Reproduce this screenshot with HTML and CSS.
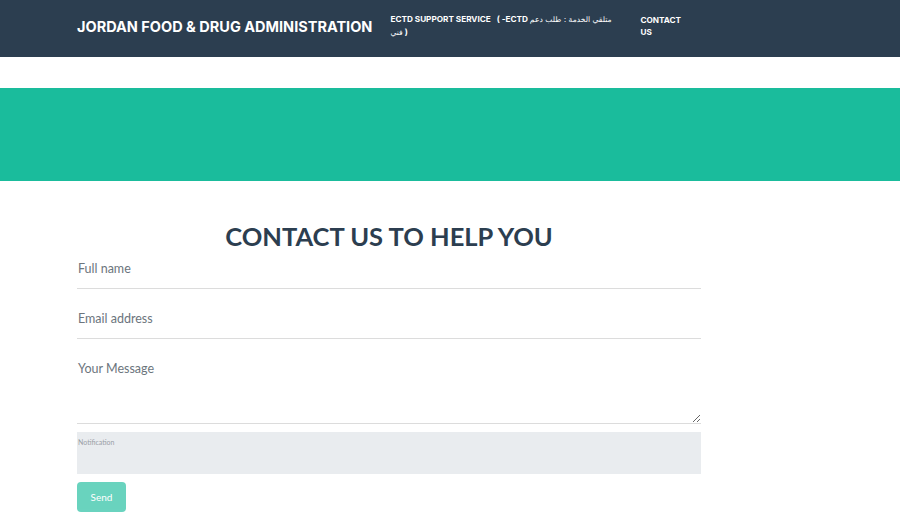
FILE: index.html
```html
<!DOCTYPE html>
<html lang="en">
<head>
<meta charset="utf-8">
<title>Contact</title>
<link rel="stylesheet" href="styles.css">
</head>
<body>
<nav class="navbar">
  <a class="brand" href="#">JORDAN FOOD &amp; DRUG ADMINISTRATION</a>
  <ul class="nav">
    <li class="nav-item item-support"><a href="#">ECTD SUPPORT SERVICE &nbsp; ( -ECTD <span class="ar">متلقي الخدمة : طلب دعم فني</span> )</a></li>
    <li class="nav-item item-contact"><a href="#">CONTACT US</a></li>
  </ul>
</nav>
<div class="spacer"></div>
<header class="masthead"></header>
<section class="contact">
  <h2 class="title">CONTACT US TO HELP YOU</h2>
  <form class="form">
    <input class="field" type="text" placeholder="Full name">
    <input class="field" type="email" placeholder="Email address">
    <textarea class="field message" placeholder="Your Message"></textarea>
    <div class="notification">Notification</div>
    <button class="send" type="button" disabled>Send</button>
  </form>
</section>
</body>
</html>
```

FILE: styles.css
```css
* { box-sizing: border-box; }
html, body { margin: 0; padding: 0; background: #fff; }
body { font-family: Lato, "Open Sans", sans-serif; color: #212529; }

.navbar {
  height: 57px;
  background: #2c3e50;
  display: flex;
  align-items: center;
  padding: 0 0 5px 77px;
}
.brand {
  font-family: Inter, "Open Sans", sans-serif;
  font-weight: 700;
  font-size: 14.5px;
  color: #fff;
  text-decoration: none;
  white-space: nowrap;
}
.nav {
  list-style: none;
  margin: 0 0 0 18px;
  padding: 0;
  display: flex;
  align-items: center;
}
.nav-item a {
  display: block;
  font-family: Inter, "DejaVu Sans", sans-serif;
  font-weight: 700;
  font-size: 8.2px;
  line-height: 12.5px;
  color: #fff;
  text-decoration: none;
}
.ar { font-family: "DejaVu Sans", sans-serif; font-weight: 400; font-size: 7.6px; }
.item-support { width: 228px; }
.item-contact { width: 46px; margin-left: 22px; }

.spacer { height: 31px; }
.masthead { height: 93px; background: #1abc9c; }

.contact {
  width: 624px;
  margin-left: 77px;
  padding-top: 39px;
}
.title {
  margin: 0 0 2px;
  text-align: center;
  font-family: Lato, sans-serif;
  font-weight: 700;
  font-size: 25.5px;
  line-height: 32px;
  color: #2c3e50;
}
.form { display: flex; flex-direction: column; align-items: flex-start; }
.field {
  display: block;
  width: 100%;
  border: none;
  border-bottom: 1px solid #dcdcdc;
  outline: none;
  font-family: Lato, sans-serif;
  font-size: 12.5px;
  color: #495057;
  background: transparent;
  padding: 10px 1px 0;
  height: 50px;
}
.field:first-child { height: 35px; padding: 0 1px 6px; }
.field::placeholder { color: #6c757d; }
.message {
  height: 85px;
  padding-top: 21px;
  resize: vertical;
  line-height: 18px;
}
.notification {
  margin-top: 8px;
  width: 100%;
  height: 42px;
  background: #e9ecef;
  font-family: Lato, sans-serif;
  font-size: 7px;
  color: #9aa0a6;
  padding: 6px 1px;
}
.send {
  margin-top: 8px;
  width: 49px;
  height: 30px;
  border: none;
  border-radius: 4px;
  background: #1abc9c;
  opacity: 0.65;
  color: #fff;
  font-family: Lato, sans-serif;
  font-size: 10px;
}
```
